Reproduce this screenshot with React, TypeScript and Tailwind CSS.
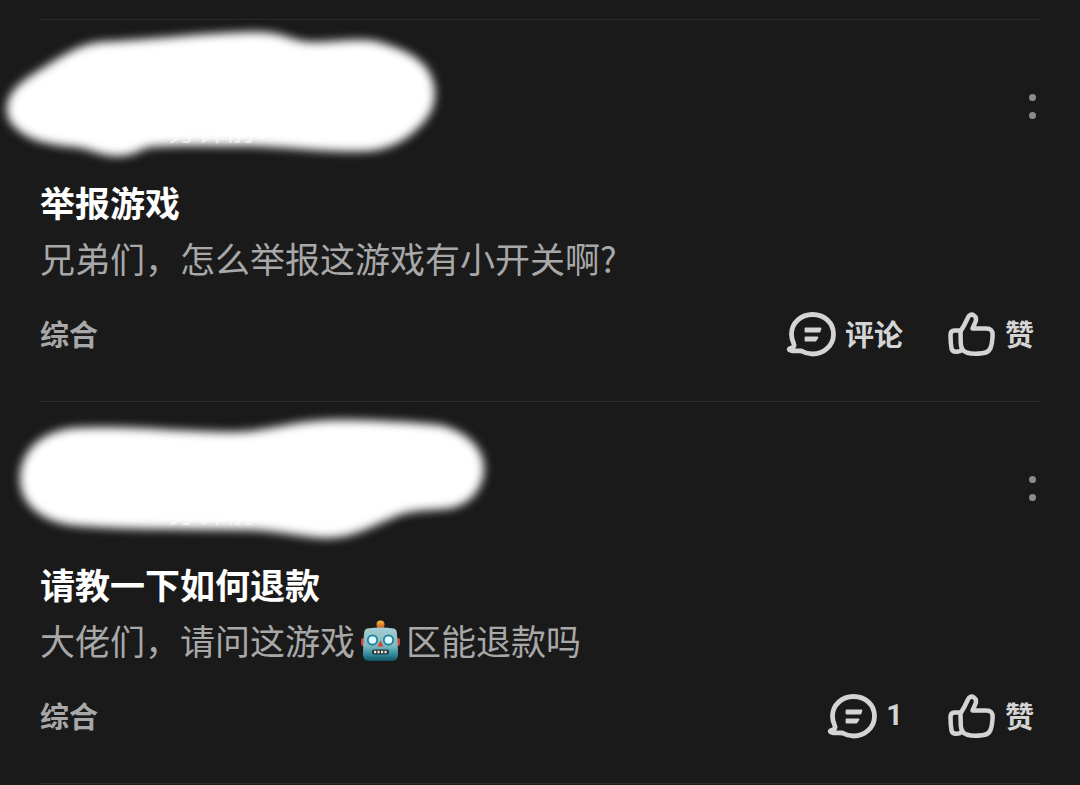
/**
 * App.tsx
 *
 * Dark forum feed: posts separated by hairlines, author row brushed out.
 */

import { type ReactNode } from "react";

interface Post {
  id: number;
  title: string;
  body: ReactNode;
  tag: string;
  comments: number;
  /** Outline of the brush stroke that hides the author row */
  brush: string;
}

const POSTS: Post[] = [
  {
    id: 1,
    title: "举报游戏",
    body: "兄弟们，怎么举报这游戏有小开关啊?",
    tag: "综合",
    comments: 0,
    brush:
      "M7 85 C9 72 20 62 35 53 C55 41 75 25 100 22 C150 20 200 13 250 12 C285 11 290 21 310 22 C335 22 355 18 375 21 C400 28 420 36 429 52 C437 66 437 84 427 98 C413 116 395 128 370 131 C330 133 290 127 250 126 C215 126 175 125 150 127 C138 130 134 136 118 136 C100 136 92 129 75 127 C50 125 30 121 17 109 C9 103 6 95 7 85 Z",
  },
  {
    id: 2,
    title: "请教一下如何退款",
    body: (
      <>
        大佬们，请问这游戏
        <RobotEmoji />
        区能退款吗
      </>
    ),
    tag: "综合",
    comments: 1,
    brush:
      "M20 77 C20 50 40 29 75 26 C130 23 180 30 235 30 C270 29 290 19 335 18 C375 18 410 20 440 23 C465 29 484 45 484 67 C483 89 468 105 445 107 C425 109 410 107 390 117 C370 125 350 137 325 136 C300 135 280 129 250 128 C190 127 130 128 80 124 C45 122 20 104 20 77 Z",
  },
];

export default function App() {
  return (
    <main className="min-h-screen bg-[#1a1a1a] px-10 pt-[19px] font-['Noto_Sans_CJK_SC',sans-serif]">
      {POSTS.map((post) => (
        <PostItem key={post.id} post={post} />
      ))}
      <hr className="border-[#2b2b2b]" />
    </main>
  );
}

function PostItem({ post }: { post: Post }) {
  return (
    <article className="relative border-t border-[#2b2b2b] pt-12 pb-[43px]">
      {/* ── Author row ─────────────────────────────────────── */}
      <header className="flex h-[76px] items-center justify-between">
        <p className="self-end pl-32 text-[29px] leading-8 text-[#9b9b9b]">分钟前</p>
        <button type="button" aria-label="更多" className="flex flex-col gap-[11px] p-1">
          <span className="size-[7px] rounded-full bg-[#8c8c8c]" />
          <span className="size-[7px] rounded-full bg-[#8c8c8c]" />
        </button>
      </header>
      <BrushStroke d={post.brush} id={`soft-${post.id}`} />

      <h2 className="mt-[30px] text-[35px] leading-[56px] font-bold text-white">{post.title}</h2>
      <p className="text-[35px] leading-[56px] font-normal text-[#a8a8a8]">{post.body}</p>

      {/* ── Tag and actions ────────────────────────────────── */}
      <footer className="mt-6 flex h-12 items-center justify-between text-[29px] font-bold">
        <a href="#" className="text-[#a8a8a8]">
          {post.tag}
        </a>
        <div className="flex gap-11 pr-1.5 text-[#d4d4d4]">
          <button type="button" className="flex items-center gap-2">
            <CommentIcon />
            {post.comments > 0 ? (
              <span className="font-[Roboto,sans-serif]">{post.comments}</span>
            ) : (
              <span>评论</span>
            )}
          </button>
          <button type="button" className="flex items-center gap-2">
            <LikeIcon />
            <span>赞</span>
          </button>
        </div>
      </footer>
    </article>
  );
}

function BrushStroke({ d, id }: { d: string; id: string }) {
  return (
    <svg
      className="pointer-events-none absolute top-0 -left-10 overflow-visible"
      width="500"
      height="150"
      viewBox="0 0 500 150"
      aria-hidden="true"
    >
      <defs>
        <filter id={id} x="-10%" y="-20%" width="120%" height="140%" colorInterpolationFilters="sRGB">
          <feGaussianBlur stdDeviation="5" />
        </filter>
      </defs>
      <path d={d} fill="#fff" filter={`url(#${id})`} />
    </svg>
  );
}

function CommentIcon() {
  return (
    <svg width="51" height="46" viewBox="0 0 51 46" fill="none" aria-hidden="true">
      <path
        d="M7.500 32 C6 29 5.500 26 5.500 23 C5.500 12 15 3.500 26.500 3.500 C38.500 3.500 47.500 12 47.500 23 C47.500 34.500 38 43 26.500 43 C22.500 43 19 42 15.500 40 C11.500 39.500 8 40.500 4.500 39.200 C2.500 38.400 3 37.300 5 37 C8 36.500 8.800 34.500 7.500 32 Z"
        stroke="currentColor"
        strokeWidth="4.800"
        strokeLinejoin="round"
      />
      <path
        d="M19.500 17.500 H34.500 L33.500 20.500 H19.500 Z M19.500 26.500 H31.500 L29.500 29.500 H19.500 Z"
        fill="currentColor"
        stroke="currentColor"
        strokeWidth="1.800"
        strokeLinejoin="round"
      />
    </svg>
  );
}

function LikeIcon() {
  return (
    <svg
      width="50"
      height="46"
      viewBox="0 0 50 46"
      fill="none"
      stroke="currentColor"
      strokeWidth="4.500"
      strokeLinejoin="round"
      strokeLinecap="round"
      aria-hidden="true"
    >
      <path d="M13.500 20.500 C16 16.500 18.500 12 20.500 7.500 C22 3.500 24.500 2.800 27 4.500 C29.800 6.500 29.500 9 28 12 L25.500 17.500 H39 C44 17.500 45.800 20 45.600 24 C45.400 29 45.200 33 43.500 37 C42 40.500 39 42 35 42.300 C30 43 24 43 19.500 41.500 C15.500 40 14.200 37.500 13.800 33 Z" />
      <path d="M13.500 19.500 H7.500 C4.800 19.500 3.500 21 3.500 24 C3.500 29 3.800 33 4.500 37.500 C5 40 6.500 40.800 9 40.800 C11.500 40.800 13.500 40.500 15 38.500" />
    </svg>
  );
}

function RobotEmoji() {
  return (
    <svg
      className="mx-1.5 inline-block align-[-7px]"
      width="39"
      height="42"
      viewBox="0 0 39 42"
      role="img"
      aria-label="机器人"
    >
      <defs>
        <linearGradient id="robot-face" x1="0" y1="0" x2="0" y2="1">
          <stop offset="0" stopColor="#a9cdd2" />
          <stop offset="0.550" stopColor="#7fb9c2" />
          <stop offset="0.800" stopColor="#328c9c" />
          <stop offset="1" stopColor="#0e5363" />
        </linearGradient>
        <linearGradient id="robot-cap" x1="0" y1="0" x2="0" y2="1">
          <stop offset="0" stopColor="#ffbd3b" />
          <stop offset="1" stopColor="#c8551c" />
        </linearGradient>
      </defs>
      <rect x="0" y="18" width="5" height="8" rx="2" fill="#c9473f" />
      <rect x="34" y="18" width="5" height="8" rx="2" fill="#c9473f" />
      <path d="M13 9 Q19.500 5 26 9 Z" fill="#73adb6" />
      <circle cx="19.500" cy="4.500" r="4" fill="url(#robot-cap)" />
      <path
        d="M6 8.500 Q19.500 6.500 33 8.500 Q35.500 9 35.800 12 Q37 23 37 34 Q37 41 31 41 H8 Q2 41 2 34 Q2 23 3.200 12 Q3.500 9 6 8.500 Z"
        fill="url(#robot-face)"
      />
      <circle cx="11.500" cy="20" r="5.500" fill="#187f98" />
      <circle cx="27.500" cy="20" r="5.500" fill="#187f98" />
      <circle cx="11.500" cy="20" r="3.800" fill="#d9fbff" />
      <circle cx="27.500" cy="20" r="3.800" fill="#d9fbff" />
      <path d="M19.500 20.500 L22.500 26.500 H16.500 Z" fill="#d5432f" />
      <rect x="11" y="29.500" width="17" height="5" rx="2" fill="#24343a" />
      <path d="M13 32 H27" stroke="#f2e9c9" strokeWidth="2.600" strokeDasharray="2.200 1.300" />
    </svg>
  );
}
